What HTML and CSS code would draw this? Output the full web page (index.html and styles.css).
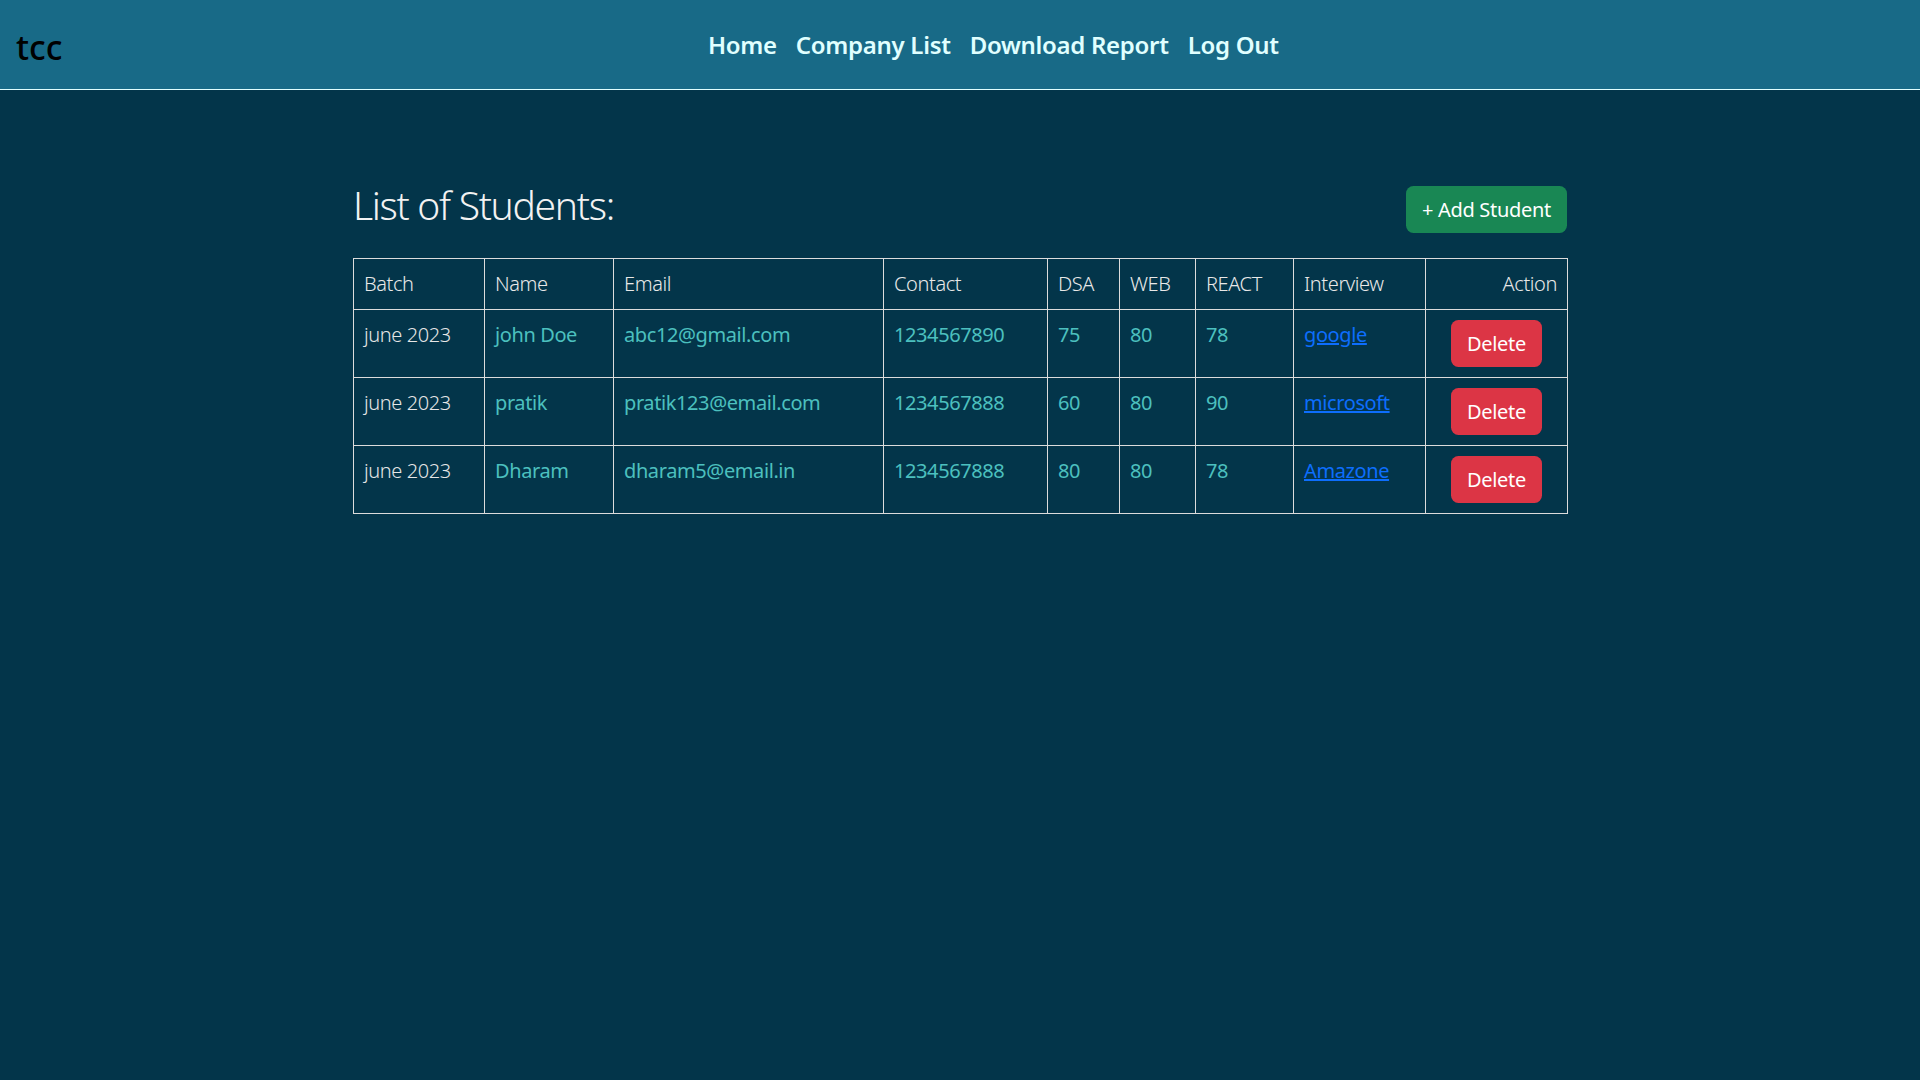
FILE: index.html
```html
<!DOCTYPE html>
<html lang="en">
<head>
<meta charset="utf-8">
<title>Students</title>
<link rel="stylesheet" href="styles.css">
</head>
<body>
<nav class="navbar">
  <div class="brand">tcc</div>
  <ul class="nav-links">
    <li><a href="#">Home</a></li>
    <li><a href="#">Company List</a></li>
    <li><a href="#">Download Report</a></li>
    <li><a href="#">Log Out</a></li>
  </ul>
</nav>
<main class="content">
  <div class="title-row">
    <h2 class="title">List of Students:</h2>
    <button class="btn btn-add">+ Add Student</button>
  </div>
  <table class="students">
    <colgroup>
      <col class="c-batch"><col class="c-name"><col class="c-email"><col class="c-contact"><col class="c-dsa"><col class="c-web"><col class="c-react"><col class="c-interview"><col class="c-action">
    </colgroup>
    <thead>
      <tr>
        <th>Batch</th><th>Name</th><th>Email</th><th>Contact</th><th>DSA</th><th>WEB</th><th>REACT</th><th>Interview</th><th class="th-action">Action</th>
      </tr>
    </thead>
    <tbody>
      <tr>
        <td class="batch">june 2023</td><td>john Doe</td><td>abc12@gmail.com</td><td>1234567890</td><td>75</td><td>80</td><td>78</td><td><a href="#">google</a></td><td class="action"><button class="btn btn-delete">Delete</button></td>
      </tr>
      <tr>
        <td class="batch">june 2023</td><td>pratik</td><td>pratik123@email.com</td><td>1234567888</td><td>60</td><td>80</td><td>90</td><td><a href="#">microsoft</a></td><td class="action"><button class="btn btn-delete">Delete</button></td>
      </tr>
      <tr>
        <td class="batch">june 2023</td><td>Dharam</td><td>dharam5@email.in</td><td>1234567888</td><td>80</td><td>80</td><td>78</td><td><a href="#">Amazone</a></td><td class="action"><button class="btn btn-delete">Delete</button></td>
      </tr>
    </tbody>
  </table>
</main>
</body>
</html>
```
FILE: styles.css
```css
html, body {
  margin: 0;
  padding: 0;
}
body {
  background: #03354a;
  font-family: "Noto Sans", "Open Sans", sans-serif;
  font-size: 20px;
  line-height: 1.5;
  letter-spacing: -0.4px;
  color: #e6e6e6;
  min-height: 1080px;
}
.navbar {
  display: flex;
  align-items: center;
  height: 89px;
  background: #186a87;
  border-bottom: 1px solid #e0ffff;
  padding-left: 16px;
}
.brand {
  flex: none;
  width: 47px;
  font-size: 34px;
  font-weight: 500;
  color: #000;
  line-height: 1;
  margin-top: 4px;
  letter-spacing: 0;
}
.nav-links {
  display: flex;
  gap: 19px;
  list-style: none;
  margin: 0 0 0 645px;
  padding: 0;
}
.nav-links a {
  color: #e0ffff;
  text-decoration: none;
  font-size: 24px;
  font-weight: 600;
  letter-spacing: -0.3px;
}
.content {
  width: 1214px;
  margin: 0 auto;
}
.title-row {
  display: flex;
  justify-content: space-between;
  align-items: flex-start;
  margin-top: 96px;
}
.title {
  margin: -4px 0 0;
  font-size: 39px;
  font-weight: 300;
  line-height: 1.2;
  letter-spacing: -1.3px;
  color: #f2f2f2;
}
.btn {
  font-family: inherit;
  font-size: 20px;
  line-height: 30px;
  letter-spacing: -0.3px;
  padding: 7.5px 15px;
  border: 1px solid transparent;
  border-radius: 7.5px;
  color: #fff;
  cursor: pointer;
}
.btn-add {
  background: #198754;
}
.btn-delete {
  background: #dc3545;
}
.students {
  margin-top: 25px;
  width: 1214px;
  table-layout: fixed;
  border-collapse: collapse;
  border: 1px solid #dcdcdc;
}
.c-batch { width: 131px; }
.c-name { width: 129px; }
.c-email { width: 270px; }
.c-contact { width: 164px; }
.c-dsa { width: 72px; }
.c-web { width: 76px; }
.c-react { width: 98px; }
.c-interview { width: 132px; }
.c-action { width: 142px; }
.students th,
.students td {
  border: 1px solid #dcdcdc;
  padding: 10px;
  vertical-align: top;
  text-align: left;
  line-height: 30px;
  white-space: nowrap;
}
.students th {
  font-weight: 300;
  color: #e8e8e8;
}
.students td {
  color: #4cc0bf;
}
.students td.batch {
  color: #e6e6e6;
  font-weight: 300;
}
.students th.th-action {
  text-align: right;
}
.students td.action {
  text-align: center;
}
.students a {
  color: #0d6efd;
  text-decoration: underline;
}
```
